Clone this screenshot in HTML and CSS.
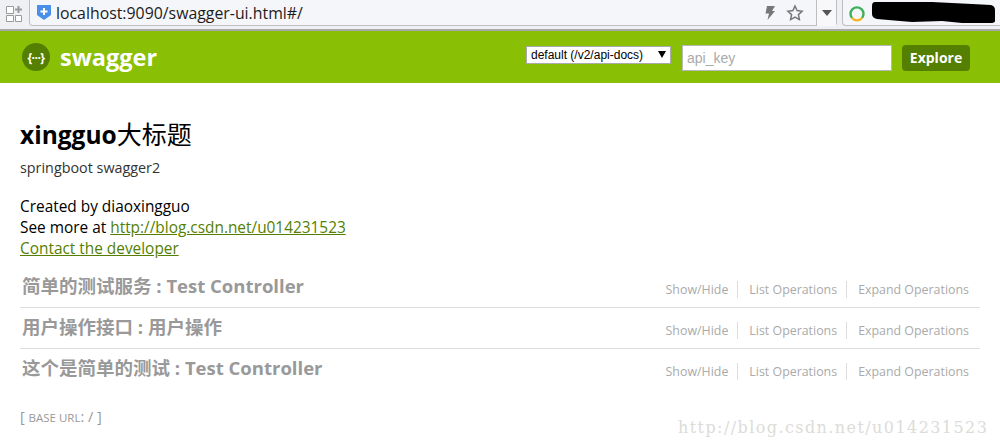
FILE: index.html
```html
<!DOCTYPE html>
<html lang="zh">
<head>
<meta charset="utf-8">
<title>Swagger UI</title>
<link rel="stylesheet" href="styles.css">
</head>
<body>
<div class="chrome">
  <svg class="tabs-icon" width="18" height="18" viewBox="0 0 18 18"><path d="M1.500 1.500h7v7h-7zM1.500 10.500h7v6h-7zM10.500 10.500h6v6h-6z" fill="#fff" stroke="#9a9a9a"/><path d="M13.500 1v7M10 4.500h7" stroke="#9a9a9a" stroke-width="2"/></svg>
  <div class="address">
    <svg class="shield" width="14" height="17" viewBox="0 0 14 17"><path d="M0 1h14v10l-7 5-7-5z" fill="#4a90e8"/><path d="M7 4v7M3.500 7.500h7" stroke="#fff" stroke-width="2"/></svg>
    <span class="url">localhost:9090/swagger-ui.html#/</span>
    <svg class="bolt" width="12" height="16" viewBox="0 0 12 16"><path d="M3 1h8L8 6h3L3.500 15 5 8.500H1.500z" fill="#777"/></svg>
    <svg class="star" width="18" height="18" viewBox="0 0 18 18"><path d="M9 2l2.100 4.600 5 .6-3.700 3.400 1 5L9 13.100l-4.400 2.500 1-5L1.900 7.200l5-.6z" fill="none" stroke="#777" stroke-width="1.500"/></svg>
    <span class="drop"><i class="tri"></i></span>
  </div>
  <div class="search">
    <svg width="18" height="18" viewBox="0 0 18 18"><path d="M4 14A6.500 6.500 0 1 1 14 14" fill="none" stroke="#3db05a" stroke-width="2.400"/><path d="M4 14A6.500 6.500 0 0 0 14 14" fill="none" stroke="#f5b324" stroke-width="2.400"/></svg>
    <svg class="redact" width="123" height="21" viewBox="0 0 123 21"><path d="M3 0H60L100 2 119 3Q123 4 123 8V19Q123 21 118 21H90L70 19 40 20 28 19 5 17Q0 16 0 12V4Q0 0 3 0z" fill="#000"/></svg>
  </div>
</div>
<header class="topbar">
  <div class="brand">
    <span class="logo">{···}</span>
    <span class="brand-name">swagger</span>
  </div>
  <div class="controls">
    <div class="spec-wrap"><select class="spec"><option>default (/v2/api-docs)</option></select></div>
    <input class="key" placeholder="api_key">
    <a class="explore">Explore</a>
  </div>
</header>
<main class="content">
  <h1 class="title">xingguo<span class="cjk">大标题</span></h1>
  <p class="desc">springboot swagger2</p>
  <div class="meta">
    <div>Created by diaoxingguo</div>
    <div>See more at <a>http://blog.csdn.net/u014231523</a></div>
    <div><a>Contact the developer</a></div>
  </div>
  <ul class="resources">
    <li class="resource">
      <h2>简单的测试服务 : Test Controller</h2>
      <div class="ops"><a>Show/Hide</a><a>List Operations</a><a>Expand Operations</a></div>
    </li>
    <li class="resource">
      <h2>用户操作接口 : 用户操作</h2>
      <div class="ops"><a>Show/Hide</a><a>List Operations</a><a>Expand Operations</a></div>
    </li>
    <li class="resource">
      <h2>这个是简单的测试 : Test Controller</h2>
      <div class="ops"><a>Show/Hide</a><a>List Operations</a><a>Expand Operations</a></div>
    </li>
  </ul>
  <p class="base">[ <span class="base-label">BASE URL</span>: / ]</p>
</main>
<div class="watermark">http://blog.csdn.net/u014231523</div>
</body>
</html>
```
FILE: styles.css
```css
html, body { margin: 0; padding: 0; background: #fff; }
body { width: 1000px; height: 448px; overflow: hidden; position: relative; font-family: "Open Sans", "Noto Sans CJK SC", sans-serif; color: #000; }
.chrome { height: 31px; box-sizing: border-box; background: #eef0f4; border-bottom: 2px solid #a9a9ad; display: flex; align-items: flex-start; padding-left: 5px; }
.tabs-icon { margin-top: 5px; }
.address { margin-left: 6px; width: 808px; height: 26px; box-sizing: border-box; background: #f5f6fa; border: 1px solid #bdbdc2; border-top: 0; border-radius: 0 0 4px 4px; display: flex; align-items: center; padding-left: 7px; }
.shield { flex: none; }
.url { margin-left: 5px; font-size: 15.850px; color: #1c1c1c; flex: 1; }
.bolt { margin-right: 10px; }
.star { margin-right: 12px; }
.drop { width: 19px; height: 26px; border-left: 1px solid #bdbdc2; background: #f8f8fa; display: flex; align-items: center; justify-content: center; }
.tri { width: 0; height: 0; border: 5px solid transparent; border-top: 6px solid #555; border-bottom: 0; }
.search { margin-left: 5px; flex: 1; height: 26px; box-sizing: border-box; background: #f5f6fa; border-left: 1px solid #bdbdc2; border-bottom: 1px solid #bdbdc2; border-radius: 0 0 0 4px; display: flex; align-items: center; padding-left: 5px; }
.redact { margin-left: 6px; flex: none; }
.topbar { height: 52px; background: #89bf04; display: flex; align-items: center; justify-content: space-between; padding: 0 30px 0 22px; }
.brand { display: flex; align-items: center; }
.logo { width: 28px; height: 28px; border-radius: 50%; background: #547f00; color: #fff; font-size: 12px; font-weight: 700; display: flex; align-items: center; justify-content: center; letter-spacing: -.5px; }
.brand-name { margin-left: 10px; color: #fff; font-size: 23.500px; font-weight: 700; line-height: 28px; }
.controls { display: flex; align-items: center; margin-top: 2px; }
.spec-wrap { position: relative; margin-top: -6px; height: 18px; }
.spec-wrap::after { content: ""; position: absolute; right: 5px; top: 5px; width: 0; height: 0; border: 4px solid transparent; border-top: 7px solid #000; border-bottom: 0; pointer-events: none; }
.spec { display: block; appearance: none; width: 145px; height: 18px; font-family: "Liberation Sans", sans-serif; font-size: 12px; background: #fff; color: #000; border: 1px solid #aaa; padding: 0 0 0 4px; border-radius: 0; }
.key { margin-left: 11px; width: 210px; height: 26px; box-sizing: border-box; border: 1px solid #b8b8b8; padding: 0 4px; font-family: "Liberation Sans", sans-serif; font-size: 14px; background: #fff; }
.key::placeholder { color: #aaa; opacity: 1; }
.explore { margin-left: 10px; width: 68px; height: 26px; border-radius: 4px; background: #547f00; color: #fff; font-size: 14px; font-weight: 700; display: flex; align-items: center; justify-content: center; padding-bottom: 1px; box-sizing: border-box; }
.content { padding: 0 20px; }
.title { margin: 35px 0 0; font-size: 24.500px; line-height: 30px; font-weight: 700; }
.cjk { font-family: "Noto Sans CJK SC", sans-serif; font-weight: 400; font-size: 25px; }
.desc { margin: 8px 0 0; font-size: 14.350px; line-height: 20px; color: #333; }
.meta { margin-top: 18px; font-size: 15.400px; line-height: 21px; }
.meta a { color: #547f00; text-decoration: underline; }
.resources { list-style: none; margin: 9px 0 0; padding: 0; }
.resource { height: 39px; margin-bottom: 1px; border-bottom: 1px solid #ddd; display: flex; justify-content: space-between; align-items: flex-start; padding-left: 2px; }
.resource:last-child { border-bottom: 0; }
.resource h2 { margin: 0; font-size: 18.500px; line-height: 36px; font-weight: 700; color: #999; }
.ops { display: flex; font-size: 12.400px; color: #aaa; margin-top: 13px; padding-right: 11px; }
.ops a { line-height: 17px; padding: 0 9px 0 11px; border-right: 1px solid #ddd; }
.ops a:last-child { border-right: 0; padding-right: 0; }
.base { margin: 18px 0 0; font-size: 14.500px; line-height: 20px; color: #999; }
.base-label { font-size: 11.500px; }
.watermark { position: absolute; left: 678px; top: 418px; font-family: "DejaVu Serif", "Liberation Serif", serif; font-size: 16px; letter-spacing: 1.420px; color: #dcdcd8; white-space: nowrap; }
```
